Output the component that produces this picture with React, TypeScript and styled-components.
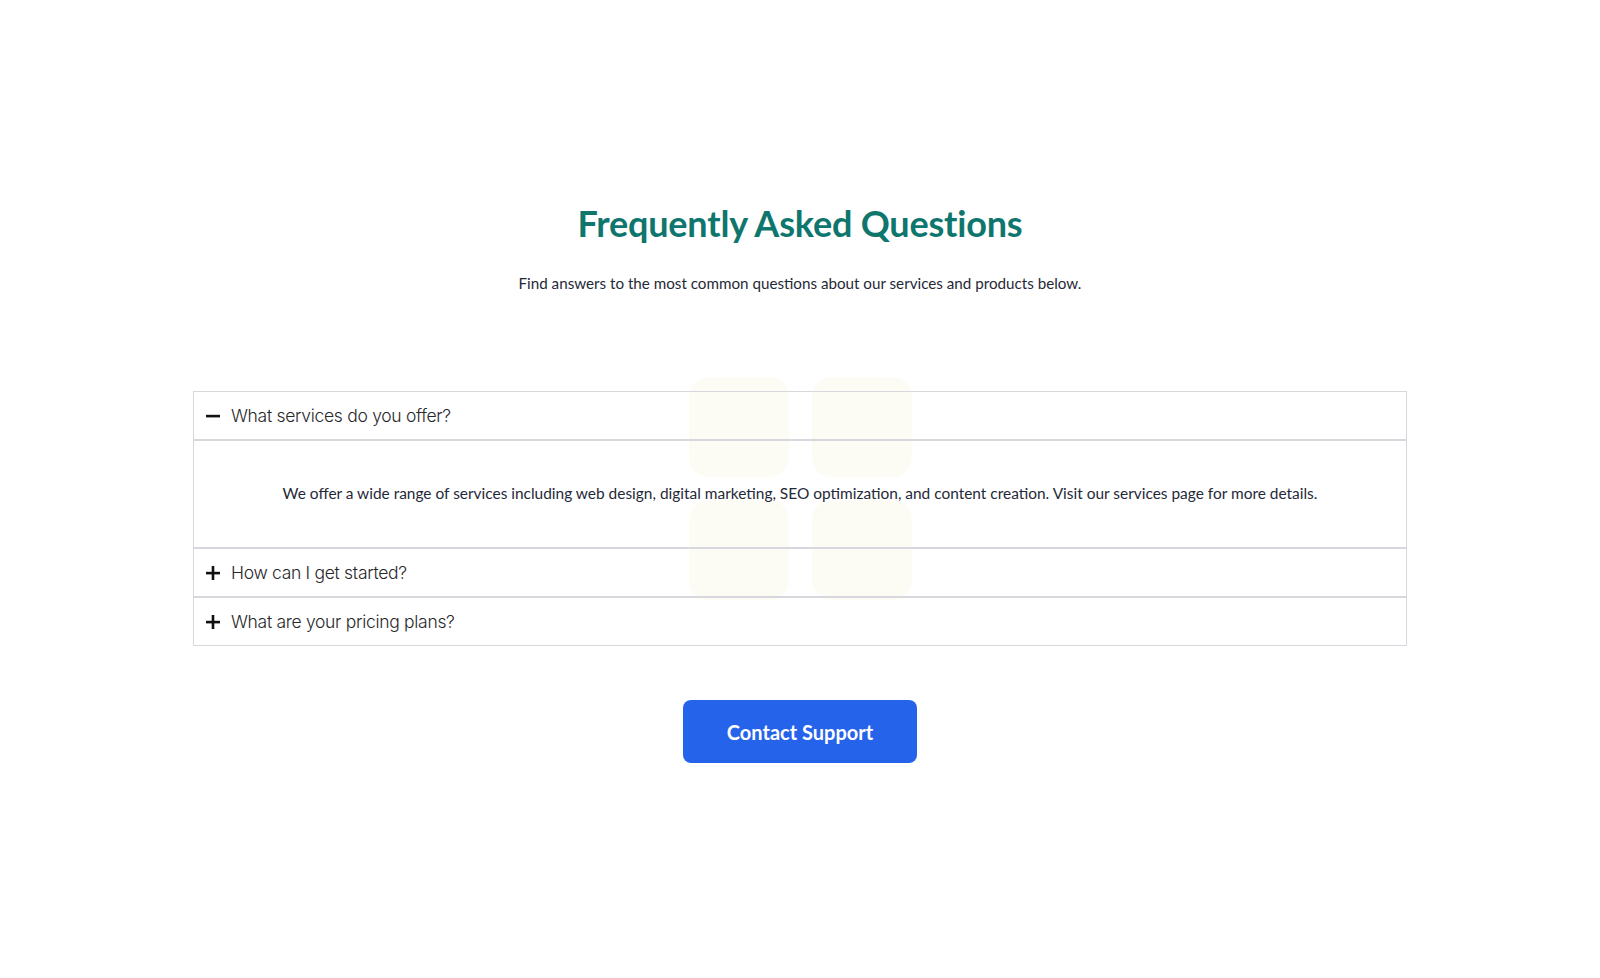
import React, { useState } from "react";
import styled, { createGlobalStyle } from "styled-components";

const GlobalStyle = createGlobalStyle`
  html, body { margin: 0; padding: 0; background: #ffffff; }
  body { font-family: "Lato", "Inter", sans-serif; color: #1f2937; }
  * { box-sizing: border-box; }
`;

const Page = styled.main`
  min-height: 978px;
  display: flex;
  flex-direction: column;
  align-items: center;
  padding: 201px 0 0;
`;

const Title = styled.h1`
  margin: 0;
  font-family: "Lato", sans-serif;
  font-weight: 700;
  font-size: 36px;
  line-height: 44px;
  color: #0f766e;
  letter-spacing: -0.2px;
`;

const Subtitle = styled.p`
  margin: 27px 0 0;
  font-family: "Lato", sans-serif;
  font-size: 15.2px;
  line-height: 22px;
  color: #1f2937;
`;

const AccordionWrap = styled.section`
  position: relative;
  width: 1214px;
  margin-top: 97px;
`;

const Decor = styled.div`
  position: absolute;
  left: 496px;
  top: -14px;
  display: grid;
  grid-template-columns: 100px 100px;
  grid-template-rows: 100px 100px;
  gap: 23px;
  pointer-events: none;
  z-index: 0;
`;

const DecorSquare = styled.div`
  border-radius: 20px;
  background: #fdfcf4;
`;

const List = styled.div`
  position: relative;
  z-index: 1;
  display: flex;
  flex-direction: column;
`;

const Item = styled.div`
  border: 1px solid #d6d8dd;
`;

const Header = styled.button`
  width: 100%;
  height: 47px;
  display: flex;
  align-items: center;
  gap: 9px;
  padding: 0 0 0 10px;
  background: transparent;
  border: none;
  font-family: "Inter", sans-serif;
  font-weight: 300;
  font-size: 17.5px;
  color: #27272a;
  cursor: pointer;
  text-align: left;
  letter-spacing: -0.3px;
`;

const IconBox = styled.span`
  width: 18px;
  height: 18px;
  display: flex;
  align-items: center;
  justify-content: center;
`;

const Answer = styled.div`
  height: 108px;
  border-top: 2px solid #d6d8dd;
  display: flex;
  align-items: center;
  justify-content: center;
  padding: 0 20px 2px;
  font-family: "Lato", sans-serif;
  font-size: 15.45px;
  color: #1f2937;
`;

const Button = styled.button`
  margin-top: 54px;
  width: 234px;
  height: 63px;
  border: none;
  border-radius: 8px;
  background: #2563eb;
  color: #ffffff;
  font-family: "Lato", sans-serif;
  font-weight: 700;
  font-size: 20px;
  cursor: pointer;
`;

const Minus = () => (
  <svg width="16" height="16" viewBox="0 0 16 16">
    <rect x="1" y="6.8" width="14" height="2.6" fill="#111" />
  </svg>
);

const Plus = () => (
  <svg width="16" height="16" viewBox="0 0 16 16">
    <rect x="1" y="6.8" width="14" height="2.6" fill="#111" />
    <rect x="6.7" y="1" width="2.6" height="14" fill="#111" />
  </svg>
);

const faqs = [
  {
    q: "What services do you offer?",
    a: "We offer a wide range of services including web design, digital marketing, SEO optimization, and content creation. Visit our services page for more details.",
  },
  {
    q: "How can I get started?",
    a: "Simply contact us through our form or call our support line to schedule a free consultation.",
  },
  {
    q: "What are your pricing plans?",
    a: "We offer flexible pricing plans tailored to your needs. Contact us for a custom quote.",
  },
];

export default function App() {
  const [open, setOpen] = useState<number>(0);
  return (
    <>
      <GlobalStyle />
      <Page>
        <Title>Frequently Asked Questions</Title>
        <Subtitle>Find answers to the most common questions about our services and products below.</Subtitle>
        <AccordionWrap>
          <Decor>
            <DecorSquare />
            <DecorSquare />
            <DecorSquare />
            <DecorSquare />
          </Decor>
          <List>
            {faqs.map((f, i) => (
              <Item key={f.q}>
                <Header onClick={() => setOpen(open === i ? -1 : i)}>
                  <IconBox>{open === i ? <Minus /> : <Plus />}</IconBox>
                  {f.q}
                </Header>
                {open === i && <Answer>{f.a}</Answer>}
              </Item>
            ))}
          </List>
        </AccordionWrap>
        <Button>Contact Support</Button>
      </Page>
    </>
  );
}
